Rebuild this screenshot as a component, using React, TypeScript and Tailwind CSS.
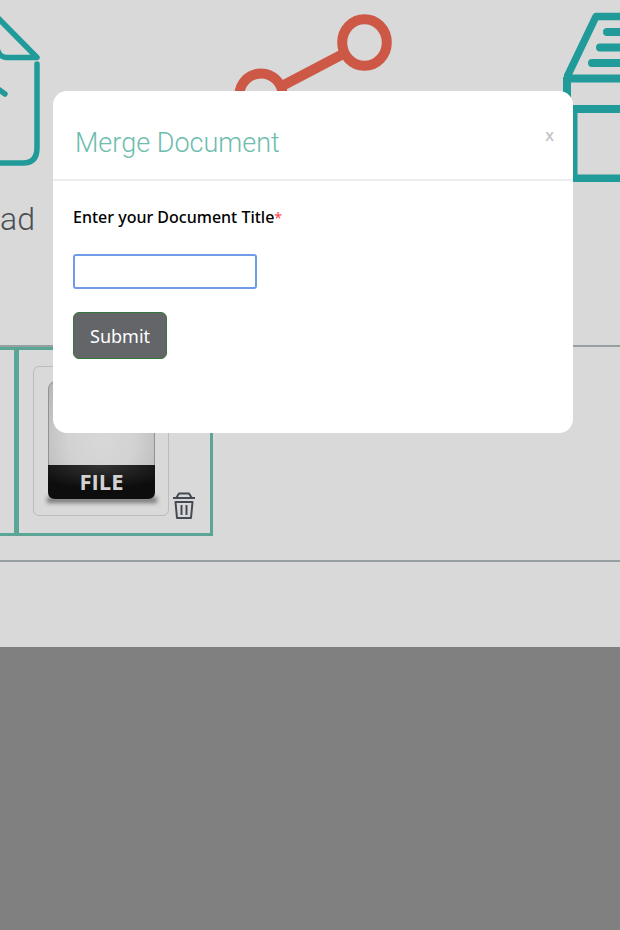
import { useState } from 'react'

function UploadIcon() {
  return (
    <svg className="h-[166px] w-16" viewBox="0 0 64 166" fill="none" stroke="#219b99" strokeWidth="5.500" strokeLinecap="round" strokeLinejoin="round">
      <path d="M-3 17 L37 57.500 H6 Q-1 57 -3 48" />
      <path d="M37 64 V148 Q37 163 23 163 H-4" />
      <path d="M-6 86 L5 94" />
    </svg>
  )
}

function ShareIcon() {
  return (
    <svg className="h-[166px] w-[158px]" viewBox="234 0 158 166" fill="none" stroke="#cc5845" strokeWidth="10">
      <ellipse cx="364.500" cy="42.500" rx="22.300" ry="23.300" />
      <circle cx="261" cy="95" r="21.500" />
      <path d="M282 86 L343 54" />
    </svg>
  )
}

function ArchiveIcon() {
  return (
    <svg className="h-[182px] w-[58px]" viewBox="562 0 58 182" fill="none" stroke="#219b99">
      <path d="M624 16.500 H596 L567 77" strokeWidth="7.500" strokeLinejoin="round" />
      <path d="M563 77 H571 V110 H563 Z" fill="#219b99" stroke="none" />
      <path d="M564 78.500 H624" strokeWidth="8" />
      <path d="M607 32 H624 M600 47.500 H624 M592 63 H624" strokeWidth="8" strokeLinecap="round" />
      <path d="M562 109 H624 M562 178.500 H624" strokeWidth="8" />
      <path d="M575 109 V178" strokeWidth="5" />
    </svg>
  )
}

function FileThumb() {
  return (
    <svg className="w-full" viewBox="0 0 134 148" role="img" aria-label="File">
      <defs>
        <radialGradient id="paper" cx="0.500" cy="0.500" r="0.700">
          <stop offset="0" stopColor="#d8d8d8" />
          <stop offset="0.450" stopColor="#d2d2d2" />
          <stop offset="1" stopColor="#b4b4b4" />
        </radialGradient>
        <radialGradient id="band" cx="0.500" cy="0" r="0.700">
          <stop offset="0" stopColor="#343434" />
          <stop offset="1" stopColor="#0d0d0d" />
        </radialGradient>
        <filter id="soft" x="-20%" y="-100%" width="140%" height="300%">
          <feGaussianBlur stdDeviation="2" />
        </filter>
      </defs>
      <rect x="13" y="130" width="110" height="6" fill="#777" filter="url(#soft)" />
      <rect x="14.500" y="14" width="106" height="118" rx="8" fill="url(#paper)" stroke="#929292" />
      <path d="M14 98 H121 V125 Q121 132 114 132 H21 Q14 132 14 125 Z" fill="url(#band)" />
      <text x="67.500" y="123" textAnchor="middle" fontSize="22" fontWeight="700" fill="#d2d2d2" fontFamily="'Open Sans', sans-serif">
        FILE
      </text>
    </svg>
  )
}

function TrashIcon() {
  return (
    <svg className="h-7 w-6" viewBox="0 0 24 28" fill="none" stroke="#454b55" strokeWidth="2" strokeLinejoin="round">
      <path d="M1 6 H23 M4.500 5.500 L7 1.500 H17 L19.500 5.500" />
      <path d="M3.500 10 H20.500 L19 26 H5 Z" />
      <path d="M9.500 13 V23 M14.500 13 V23" />
    </svg>
  )
}

export default function App() {
  const [open, setOpen] = useState(true)
  const [title, setTitle] = useState('')

  return (
    <div className="relative min-h-screen overflow-hidden bg-[#808080] font-['Noto_Sans',sans-serif]">
      <main className="bg-[#d9d9d9] pb-[85px]">
        <div className="flex h-[194px] items-start justify-between">
          <UploadIcon />
          <ShareIcon />
          <ArchiveIcon />
        </div>
        <h2 className="h-[151px] font-['Roboto',sans-serif] text-[32px] leading-[50px] font-light text-[#4b4e53]">ad</h2>

        <section className="flex h-[217px] items-start border-y-2 border-[#96a0a3]">
          <div className="h-[189px] w-4 border-3 border-l-0 border-r-2 border-[#5aa596]" />
          <div className="flex h-[189px] w-[197px] items-end gap-[3px] border-3 border-[#5aa596] pb-[17px] pl-3.5">
            <div className="w-[136px] rounded-md border border-[#bcbcbc]">
              <FileThumb />
            </div>
            <button type="button" aria-label="Delete file" className="-mb-1">
              <TrashIcon />
            </button>
          </div>
        </section>
      </main>

      {open && (
        <div className="absolute inset-x-0 top-0 pt-[91px] pr-[47px] pl-[53px]">
          <div role="dialog" aria-labelledby="dialog-title" className="rounded-[14px] bg-white pb-[74px]">
            <header className="flex items-start justify-between border-b-2 border-[#ededed] pt-7 pr-[19px] pb-3 pl-[22px]">
              <h1 id="dialog-title" className="font-['Roboto',sans-serif] text-[27px] leading-[48px] font-light text-[#6dbdac]">
                Merge Document
              </h1>
              <button type="button" aria-label="Close" className="pt-1 text-base leading-6 font-medium text-[#bfc1c5]" onClick={() => setOpen(false)}>
                x
              </button>
            </header>
            <form className="flex flex-col items-start px-5 pt-6" onSubmit={(e) => e.preventDefault()}>
              <label htmlFor="doc-title" className="text-base leading-6 font-medium text-black">
                Enter your Document Title<span className="text-sm leading-none font-normal text-[#ff4040]">*</span>
              </label>
              <input
                id="doc-title"
                type="text"
                value={title}
                onChange={(e) => setTitle(e.target.value)}
                className="mt-[25px] h-[35px] w-[184px] rounded-[3px] border-2 border-[#6f9ce8] bg-white px-2 outline-none"
              />
              <button type="submit" className="mt-[23px] h-[47px] rounded-md border border-[#35783a] bg-[#636569] px-4 text-lg text-white">
                Submit
              </button>
            </form>
          </div>
        </div>
      )}
    </div>
  )
}
